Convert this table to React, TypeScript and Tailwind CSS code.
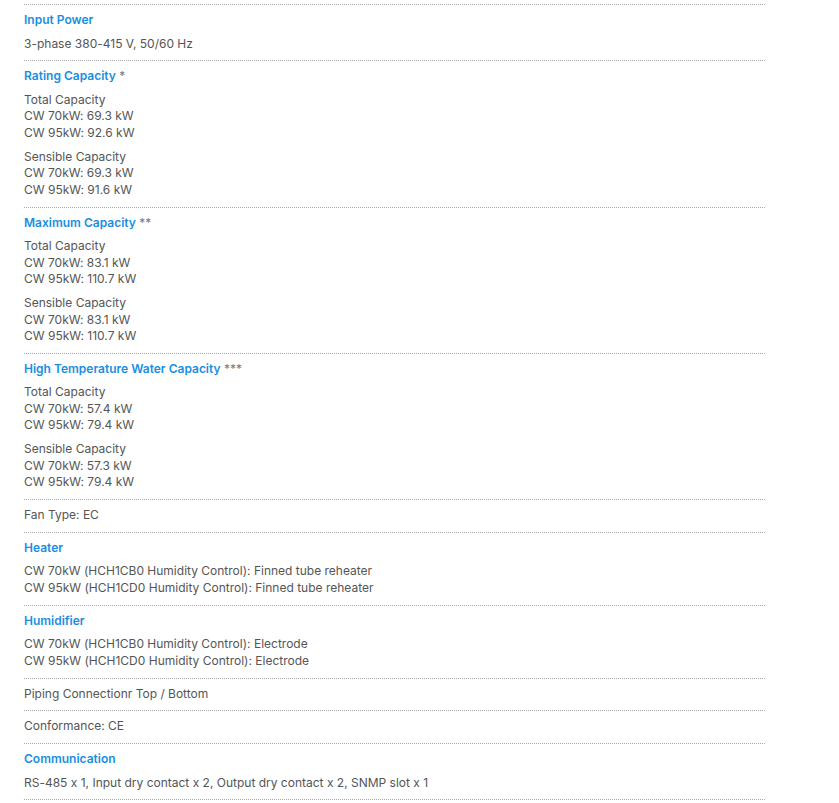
const SECTIONS: {
  title?: string;
  mark?: string;
  groups: string[][];
}[] = [
  { title: "Input Power", groups: [["3-phase 380-415 V, 50/60 Hz"]] },
  {
    title: "Rating Capacity",
    mark: "*",
    groups: [
      ["Total Capacity", "CW 70kW: 69.3 kW", "CW 95kW: 92.6 kW"],
      ["Sensible Capacity", "CW 70kW: 69.3 kW", "CW 95kW: 91.6 kW"],
    ],
  },
  {
    title: "Maximum Capacity",
    mark: "**",
    groups: [
      ["Total Capacity", "CW 70kW: 83.1 kW", "CW 95kW: 110.7 kW"],
      ["Sensible Capacity", "CW 70kW: 83.1 kW", "CW 95kW: 110.7 kW"],
    ],
  },
  {
    title: "High Temperature Water Capacity",
    mark: "***",
    groups: [
      ["Total Capacity", "CW 70kW: 57.4 kW", "CW 95kW: 79.4 kW"],
      ["Sensible Capacity", "CW 70kW: 57.3 kW", "CW 95kW: 79.4 kW"],
    ],
  },
  { groups: [["Fan Type: EC"]] },
  {
    title: "Heater",
    groups: [
      [
        "CW 70kW (HCH1CB0 Humidity Control): Finned tube reheater",
        "CW 95kW (HCH1CD0 Humidity Control): Finned tube reheater",
      ],
    ],
  },
  {
    title: "Humidifier",
    groups: [
      [
        "CW 70kW (HCH1CB0 Humidity Control): Electrode",
        "CW 95kW (HCH1CD0 Humidity Control): Electrode",
      ],
    ],
  },
  { groups: [["Piping Connectionr Top / Bottom"]] },
  { groups: [["Conformance: CE"]] },
  {
    title: "Communication",
    groups: [["RS-485 x 1, Input dry contact x 2, Output dry contact x 2, SNMP slot x 1"]],
  },
];

export default function App() {
  return (
    <div className="min-h-screen bg-white px-6 pt-1 font-['Inter',sans-serif] text-[12px] leading-[16.5px] text-[#555] [font-feature-settings:'calt'_0]">
      <div className="w-[741px] border-t border-dotted border-[#aaa]">
        {SECTIONS.map((s, i) => (
          <div key={i} className="border-b border-dotted border-[#aaa] pt-[7px] pb-[8.3px]">
            {s.title && (
              <div className="mb-[7px]">
                <span className="font-semibold text-[#1a8ee0]">{s.title}</span>
                {s.mark && <span className="text-[#777]"> {s.mark}</span>}
              </div>
            )}
            <div className="flex flex-col gap-[7.5px]">
              {s.groups.map((g, j) => (
                <div key={j}>
                  {g.map((line) => (
                    <div key={line}>{line}</div>
                  ))}
                </div>
              ))}
            </div>
          </div>
        ))}
      </div>
    </div>
  );
}
